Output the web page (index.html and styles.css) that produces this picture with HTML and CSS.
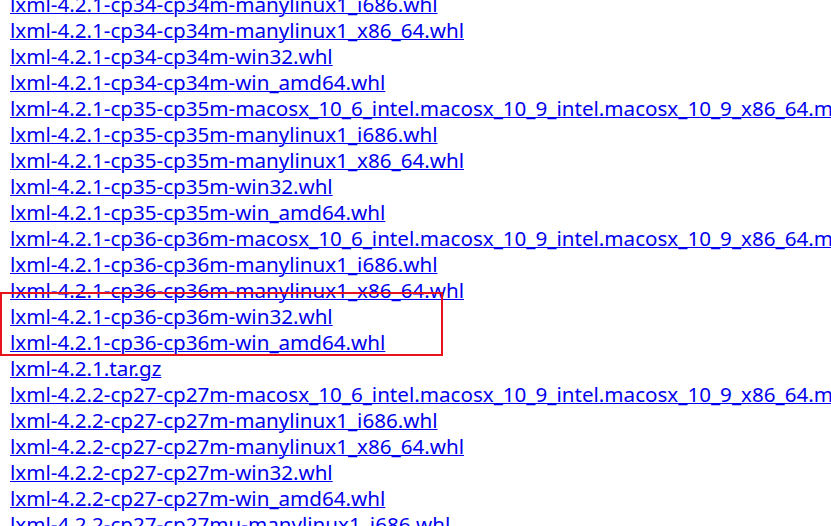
FILE: index.html
```html
<!DOCTYPE html>
<html>
<head>
<meta charset="utf-8">
<link rel="stylesheet" href="styles.css">
</head>
<body>
<div class="list">
<a href="#">lxml-4.2.1-cp34-cp34m-manylinux1_i686.whl</a>
<a href="#">lxml-4.2.1-cp34-cp34m-manylinux1_x86_64.whl</a>
<a href="#">lxml-4.2.1-cp34-cp34m-win32.whl</a>
<a href="#">lxml-4.2.1-cp34-cp34m-win_amd64.whl</a>
<a href="#">lxml-4.2.1-cp35-cp35m-macosx_10_6_intel.macosx_10_9_intel.macosx_10_9_x86_64.macosx_10_10_intel.macosx_10_10_x86_64.whl</a>
<a href="#">lxml-4.2.1-cp35-cp35m-manylinux1_i686.whl</a>
<a href="#">lxml-4.2.1-cp35-cp35m-manylinux1_x86_64.whl</a>
<a href="#">lxml-4.2.1-cp35-cp35m-win32.whl</a>
<a href="#">lxml-4.2.1-cp35-cp35m-win_amd64.whl</a>
<a href="#">lxml-4.2.1-cp36-cp36m-macosx_10_6_intel.macosx_10_9_intel.macosx_10_9_x86_64.macosx_10_10_intel.macosx_10_10_x86_64.whl</a>
<a href="#">lxml-4.2.1-cp36-cp36m-manylinux1_i686.whl</a>
<a href="#">lxml-4.2.1-cp36-cp36m-manylinux1_x86_64.whl</a>
<div class="highlight">
<a href="#">lxml-4.2.1-cp36-cp36m-win32.whl</a>
<a href="#">lxml-4.2.1-cp36-cp36m-win_amd64.whl</a>
<span class="mark-box"></span>
</div>
<a href="#">lxml-4.2.1.tar.gz</a>
<a href="#">lxml-4.2.2-cp27-cp27m-macosx_10_6_intel.macosx_10_9_intel.macosx_10_9_x86_64.macosx_10_10_intel.macosx_10_10_x86_64.whl</a>
<a href="#">lxml-4.2.2-cp27-cp27m-manylinux1_i686.whl</a>
<a href="#">lxml-4.2.2-cp27-cp27m-manylinux1_x86_64.whl</a>
<a href="#">lxml-4.2.2-cp27-cp27m-win32.whl</a>
<a href="#">lxml-4.2.2-cp27-cp27m-win_amd64.whl</a>
<a href="#">lxml-4.2.2-cp27-cp27mu-manylinux1_i686.whl</a>
</div>
</body>
</html>
```
FILE: styles.css
```css
html, body {
  margin: 0;
  padding: 0;
  background: #fff;
  overflow: hidden;
}
body {
  width: 831px;
  height: 526px;
  font-family: "Noto Sans", sans-serif;
  font-size: 20.6px;
}
.list {
  margin-top: -9px;
  display: flex;
  flex-direction: column;
  align-items: flex-start;
}
.list a {
  display: block;
  height: 26px;
  line-height: 26px;
  padding-left: 10px;
  color: #0000ee;
  text-decoration: underline;
  text-decoration-thickness: 1px;
  white-space: nowrap;
}
.highlight {
  position: relative;
  display: flex;
  flex-direction: column;
  align-items: flex-start;
}
.mark-box {
  position: absolute;
  left: 0;
  top: -11px;
  width: 443px;
  height: 64px;
  box-sizing: border-box;
  border: 2px solid #e8141c;
  pointer-events: none;
}
```
